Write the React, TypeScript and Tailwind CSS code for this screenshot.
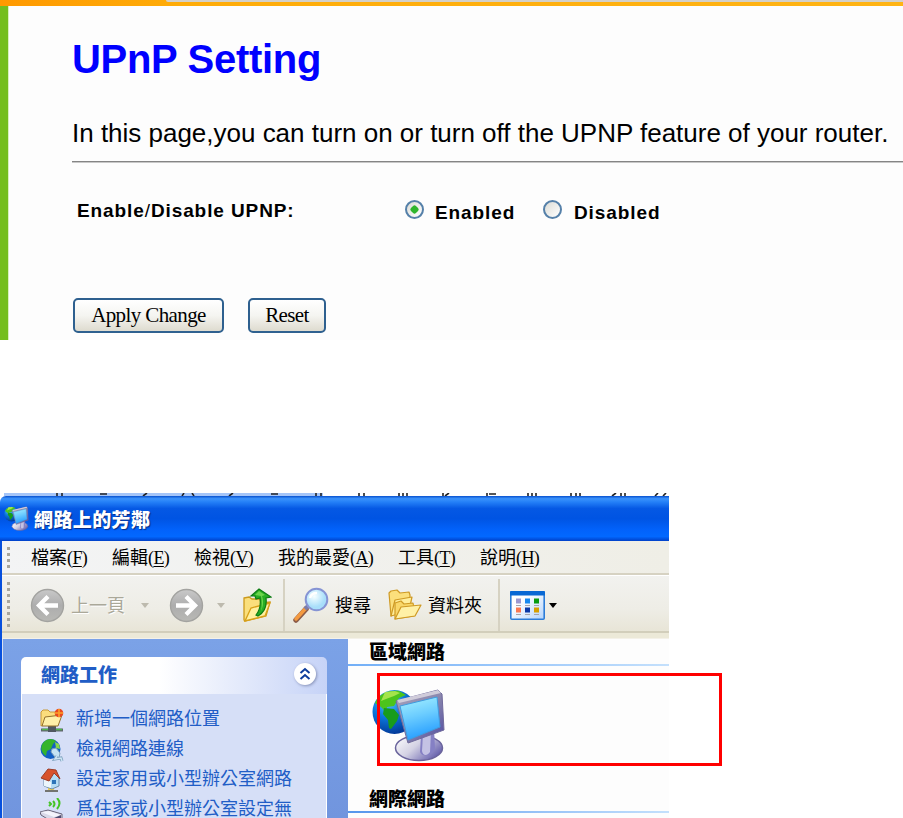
import type { ReactNode } from "react";

const cjk = "font-['Noto_Sans_CJK_TC',sans-serif]";

function GlobeMonitor({ size, className = "" }: { size: number; className?: string }) {
  return (
    <svg width={size} height={size} viewBox="0 0 74 74" className={className}>
      <defs>
        <radialGradient id="globe" cx="35%" cy="25%" r="75%">
          <stop offset="0" stopColor="#5cc8f8" />
          <stop offset=".5" stopColor="#0b78dc" />
          <stop offset="1" stopColor="#033c9c" />
        </radialGradient>
        <linearGradient id="screen" x1="0" y1="0" x2=".25" y2="1">
          <stop offset="0" stopColor="#a8f2ff" />
          <stop offset=".5" stopColor="#6ccdff" />
          <stop offset="1" stopColor="#2aa0ff" />
        </linearGradient>
        <linearGradient id="frame" x1="0" y1="0" x2="1" y2="1">
          <stop offset="0" stopColor="#a6a2bc" />
          <stop offset=".5" stopColor="#8c88ae" />
          <stop offset="1" stopColor="#4c48a0" />
        </linearGradient>
        <linearGradient id="base" x1="0" y1="0" x2="1" y2=".6">
          <stop offset="0" stopColor="#ffffff" />
          <stop offset=".5" stopColor="#d4d2e4" />
          <stop offset="1" stopColor="#6c66b0" />
        </linearGradient>
      </defs>
      <circle cx="22.500" cy="24" r="22" fill="url(#globe)" />
      <path d="M3 15C7 6 16 2 27 3l7 4-7 3-5 8-7 1-1 5-5-5z" fill="#4cc41c" />
      <path d="M13 4l10-1 5 2-6 3-8 3-5 2z" fill="#a4e44c" />
      <path d="M12 20l10 1 5 6-2 6-6 8-2-1-1-8-5-6z" fill="#189c1c" />
      <ellipse cx="47" cy="60" rx="23.500" ry="12.500" fill="url(#base)" stroke="#6a649c" strokeWidth="1.500" />
      <path d="M49 47l13-6 1 19c-1 8-13 10-15 4z" fill="#8580c4" />
      <path d="M51 46l8-3-1 21c-3 4-7 4-8-1z" fill="#c4c2e4" />
      <path d="M24 13L66 2l4 4 2 36-36 13z" fill="url(#frame)" stroke="#706a9c" strokeLinejoin="round" />
      <path d="M25 12L66 2l3 3-42 10z" fill="#d0ccda" />
      <path d="M28 18l37-9 3 30-32 13z" fill="url(#screen)" stroke="#3f9ce0" />
    </svg>
  );
}

function NavArrow({ forward = false }: { forward?: boolean }) {
  return (
    <svg width="35" height="35" viewBox="0 0 35 35">
      <defs>
        <linearGradient id="navGray" x1="0" y1="0" x2="0" y2="1">
          <stop offset="0" stopColor="#c9c9c9" />
          <stop offset=".5" stopColor="#adadad" />
          <stop offset="1" stopColor="#b9b9b5" />
        </linearGradient>
      </defs>
      <circle cx="17.500" cy="17.500" r="16" fill="url(#navGray)" stroke="#a3a3a0" strokeWidth="1.400" />
      <path
        d="M28 17.500H10M18 8.500l-9 9 9 9"
        transform={forward ? "rotate(180 17.500 17.500)" : undefined}
        fill="none"
        stroke="#fff"
        strokeWidth="4.300"
      />
    </svg>
  );
}

function FolderUpIcon() {
  return (
    <svg width="29" height="35" viewBox="0 0 29 35">
      <path d="M1 10l5-1 3 2h8l1 4 9-1-4 14-21 5-1-1z" fill="#fadf7c" stroke="#cc9a1c" strokeWidth="1.300" />
      <path d="M2 33L8 20l19-5-5 13z" fill="#fff0a0" stroke="#d8a018" strokeWidth="1.300" />
      <path d="M8 8L16 1l12 8-5 1c1 8-1 14-8 18l-2-1c4-5 5-10 4-17l-4 1-1-3z" fill="#27ae24" stroke="#0d7c14" strokeWidth="1.200" />
      <path d="M12 7l4-4 6 4-3 1c2 6 1 11-1 15 1-5 1-10 0-15z" fill="#6cd44c" />
    </svg>
  );
}

function SearchIcon() {
  return (
    <svg width="36" height="36" viewBox="0 0 36 36">
      <defs>
        <radialGradient id="lens" cx="40%" cy="35%">
          <stop offset="0" stopColor="#f8ffff" />
          <stop offset="1" stopColor="#a8defa" />
        </radialGradient>
      </defs>
      <path d="M3 33L13 22" stroke="#8c5c48" strokeWidth="5.500" strokeLinecap="round" />
      <path d="M3 32L13 21" stroke="#f49a40" strokeWidth="3.500" strokeLinecap="round" />
      <path d="M12 22l4-4" stroke="#7c7ca8" strokeWidth="4" />
      <circle cx="23.500" cy="12.500" r="10.800" fill="url(#lens)" stroke="#8694d4" strokeWidth="2" />
      <path d="M17 11c1-4 4-5 7-5" stroke="#fff" strokeWidth="2.500" fill="none" />
    </svg>
  );
}

function FoldersIcon() {
  return (
    <svg width="34" height="32" viewBox="0 0 34 32" stroke="#cf9a24" strokeWidth="1.200" strokeLinejoin="round">
      <path d="M1 4l2-2 6-1 3 3 9-1 1 3v12L3 27z" fill="#fbdf7c" />
      <path d="M3 27L7 11l17-3-3 14z" fill="#ffee9c" />
      <path d="M7 30V14l6-2 3 3 9-1 1 5v8z" fill="#f9d769" />
      <path d="M7 30l6-12 20-2-6 11z" fill="#fff1a6" />
    </svg>
  );
}

function ViewsIcon() {
  return (
    <svg width="35" height="29" viewBox="0 0 35 29">
      <defs>
        <linearGradient id="viewBg" x1="0" y1="0" x2="1" y2="1">
          <stop offset=".3" stopColor="#fff" />
          <stop offset="1" stopColor="#b4d4fc" />
        </linearGradient>
      </defs>
      <rect x=".8" y=".8" width="33.400" height="27.400" rx="1" fill="url(#viewBg)" stroke="#2c7cd8" strokeWidth="1.600" />
      <path d="M0 1Q0 0 1 0h33q1 0 1 1v3.500H0z" fill="#0868d4" />
      <path d="M6 7.500h5v5H6z" fill="#9c98d0" />
      <path d="M15 7.500h5v5h-5z" fill="#1688f0" />
      <path d="M24 7.500h5v5h-5z" fill="#089c10" />
      <path d="M6 16.500h5v5H6z" fill="#fc7850" />
      <path d="M15 16.500h5v5h-5z" fill="#0838a8" />
      <path d="M24 16.500h5v5h-5z" fill="#d8a000" />
      <path d="M6 14.500h5m4 0h5m4 0h5M6 23.500h5m4 0h5m4 0h5" stroke="#a4a4ac" />
    </svg>
  );
}

function NewPlaceIcon() {
  return (
    <svg width="24" height="25" viewBox="0 0 24 25">
      <path d="M1 22h22" stroke="#60646c" strokeWidth="3" />
      <path d="M2 21.500h6m8 0h6" stroke="#50b84c" strokeWidth="1.500" />
      <path d="M8 18h8v6H8z" fill="#505860" />
      <path d="M1 18V4l2-2h5l2 2h8l1 3v6z" fill="#fbdd7c" stroke="#c89838" />
      <path d="M2 18L5 9l17-2-4 11z" fill="#fff0a8" stroke="#94702c" />
      <circle cx="19" cy="5" r="4.300" fill="#e84820" />
      <path d="M19 1v8m-4-4h8" stroke="#fca028" strokeWidth="1.600" />
    </svg>
  );
}

function ConnectionsIcon() {
  return (
    <svg width="24" height="25" viewBox="0 0 24 25">
      <circle cx="10.500" cy="11" r="10" fill="#1260c4" />
      <path d="M3 5C7 0 12 0 16 3l-3 3-2 5-4 2-1 5C1 15 0 9 3 5z" fill="#34b42c" />
      <path d="M15 4l4 2 1 5-4-1z" fill="#88d848" />
      <path d="M12 11l4-1 4 5-1 5-4-1-4-5z" fill="#c4e4f4" stroke="#7ca0bc" />
      <path d="M17 18l-2 3 6-1 1 3" fill="none" stroke="#7ca0bc" strokeWidth="3" />
      <path d="M17 18l-2 3 6-1 1 3" fill="none" stroke="#cce4f4" strokeWidth="1.500" />
    </svg>
  );
}

function HomeIcon() {
  return (
    <svg width="24" height="25" viewBox="0 0 24 25">
      <path d="M5 23h13M11 18v5" stroke="#747470" strokeWidth="2" />
      <path d="M8 21h6" stroke="#f0cc50" strokeWidth="2" />
      <path d="M4 10v8l8 3 7-3v-9l-6-5z" fill="#b4dcf4" stroke="#6c8ca8" />
      <path d="M4 11v7l7 2v-6z" fill="#ecf6fc" />
      <path d="M1 10L8 1l8 1 4 9-6-6-5 8z" fill="#d8522c" stroke="#9c3c28" />
      <path d="M12 12h4v4h-4z" fill="#2c74b8" />
    </svg>
  );
}

function WirelessIcon() {
  return (
    <svg width="24" height="25" viewBox="0 0 24 25">
      <path d="M9 4l2 2-2 2M13 3q3 3 0 6M17 0q5 5 0 11" fill="none" stroke="#44c424" strokeWidth="2" />
      <path d="M0 14l8-2 14 4v6l-8 3-13-8z" fill="#d8d8e8" stroke="#686478" />
      <path d="M1 14l8-1 12 4-7 2z" fill="#f4f4fc" />
      <path d="M14 20l7-3v4l-7 3z" fill="#504c70" />
    </svg>
  );
}

function Caret({ className }: { className: string }) {
  return (
    <svg width="8" height="5" viewBox="0 0 8 5" className={className}>
      <path d="M0 0h8L4 5z" fill="currentColor" />
    </svg>
  );
}

function Grip({ className }: { className: string }) {
  return (
    <div
      className={`w-[4px] bg-[linear-gradient(#a7a69d_50%,transparent_50%)] bg-[length:3px_6px] bg-repeat-y ${className}`}
    />
  );
}

const menus = [
  { label: "檔案", key: "F", width: "w-[81px]" },
  { label: "編輯", key: "E", width: "w-[82px]" },
  { label: "檢視", key: "V", width: "w-[84px]" },
  { label: "我的最愛", key: "A", width: "w-[120px]" },
  { label: "工具", key: "T", width: "w-[82px]" },
  { label: "說明", key: "H", width: "w-[70px]" },
];

const tasks: { label: string; icon: ReactNode }[] = [
  { label: "新增一個網路位置", icon: <NewPlaceIcon /> },
  { label: "檢視網路連線", icon: <ConnectionsIcon /> },
  { label: "設定家用或小型辦公室網路", icon: <HomeIcon /> },
  { label: "爲住家或小型辦公室設定無", icon: <WirelessIcon /> },
];

function Radio({ checked = false }: { checked?: boolean }) {
  return (
    <span className="flex size-[19px] items-center justify-center rounded-full border-2 border-[#5580a9] bg-gradient-to-br from-[#dcdcd6] to-white">
      {checked && <span className="size-[7px] rotate-45 rounded-[2px] bg-[#2fb52c]" />}
    </span>
  );
}

function PushButton({ children, className }: { children: string; className: string }) {
  return (
    <button
      className={`h-[35px] rounded-[5px] border-2 border-[#2e608f] bg-gradient-to-b from-white via-[#f5f5f1] to-[#dedbcf] whitespace-nowrap ${className}`}
    >
      {children}
    </button>
  );
}

function RouterPage() {
  return (
    <section className="h-[340px] bg-[#fdfdfd] font-['Liberation_Sans',Arial,sans-serif] text-black">
      <div className="flex h-[6px] flex-col bg-gradient-to-r from-[#ff9900] via-[#ffac08] via-20% to-[#ffb414]">
        <div className="ml-[166px] h-[2px] rounded-bl-full bg-[#d4d0c8]" />
      </div>
      <div className="flex h-[334px]">
        <div className="w-[9px] shrink-0 border-r border-[#d8f0c0] bg-[#74be1e]" />
        <div className="min-w-0 flex-1 pl-[63px]">
          <h1 className="pt-[30px] text-[40px] leading-[46px] font-bold tracking-[-0.3px] whitespace-nowrap text-[#0000ff]">UPnP Setting</h1>
          <p className="mt-[36px] text-[26px] leading-[30px] tracking-[-0.01px] whitespace-nowrap">
            In this page,you can turn on or turn off the UPNP feature of your router.
          </p>
          <div className="mt-[13px] h-[2px] border-t border-[#858585] bg-[#c8c8c8]" />
          <div className="mt-[37px] flex h-[30px] pl-[5px] text-[19px] leading-[24px] font-bold tracking-[0.9px]">
            <span className="mt-[-1px] w-[328px]">
              Enable<span className="font-normal">/</span>Disable UPNP:
            </span>
            <Radio checked />
            <span className="mt-[1px] ml-[11px] w-[108px]">Enabled</span>
            <Radio />
            <span className="mt-[1px] ml-[12px]">Disabled</span>
          </div>
          <div className="mt-[68px] flex gap-[24px] pl-px font-['Liberation_Serif',serif] text-[21px] tracking-[-0.6px]">
            <PushButton className="w-[151px]">Apply Change</PushButton>
            <PushButton className="w-[78px]">Reset</PushButton>
          </div>
        </div>
      </div>
    </section>
  );
}

function TitleBar() {
  return (
    <div>
      <svg width="669" height="3" viewBox="0 0 669 3" className="block">
        <path d="M4 0h319v3H4z" fill="#a5c5f8" />
        <path
          d="M57 0v3m5-3v3M100 1h7M147 0l-4 3M184 0l-2 3m10-3l2 3M233 0l-4 3M271 1h7M316 0v3m5-3v3M359 0v3m5-3v3M399 0v3m4-3v3m4-3v3M443 0v3m6-3l-4 3M487 0v3m2-2h7M528 0v3m4-3v3m4-3v3M571 0v3m5-3v3m4-3v3M616 0l-4 3m9-3v3m4-3v3M658 0l-3 3m11-3l-3 3"
          stroke="#222"
          strokeWidth="1.600"
        />
      </svg>
      <div className="flex h-[45px] items-center rounded-tl-[6px] bg-[linear-gradient(#0750cf_0,#3b92fb_6%,#2581f8_13%,#0558e4_28%,#0054e3_50%,#0262fb_75%,#0268ff_90%,#0040c8_100%)] pl-[4px]">
        <GlobeMonitor size={25} />
        <span className={`ml-[5px] text-[19px] leading-[24px] font-black tracking-[0.4px] text-white [text-shadow:1px_1px_1px_#0a2b80] ${cjk}`}>網路上的芳鄰</span>
      </div>
    </div>
  );
}

function MenuBar() {
  return (
    <div className={`flex h-[34px] border-b-2 border-[#d6d2c2] bg-gradient-to-r from-[#f3f4f5] to-[#efeee6] text-[18px] leading-[31px] text-black ${cjk}`}>
      <Grip className="mt-[6px] mr-[20px] ml-[5px] h-[22px]" />
      {menus.map((m) => (
        <span key={m.key} className={`whitespace-nowrap ${m.width}`}>
          {m.label}
          <span className="font-['Liberation_Serif',serif] tracking-[-0.6px]">
            (<span className="underline underline-offset-2">{m.key}</span>)
          </span>
        </span>
      ))}
    </div>
  );
}

function Toolbar() {
  return (
    <div className={`flex h-[58px] items-center border-t border-b-2 border-t-white border-b-[#d2cebb] bg-[linear-gradient(#f2f2ef,#eeede6_60%,#e8e5d7)] pt-[3px] text-[18px] text-black ${cjk}`}>
      <Grip className="ml-[5px] h-[46px]" />
      <div className="ml-[19px]"><NavArrow /></div>
      <span className="mb-[2px] ml-[6px] w-[70px] text-[#aaa899] [text-shadow:1px_1px_#fff]">上一頁</span>
      <Caret className="text-[#bdbaae]" />
      <div className="ml-[20px]"><NavArrow forward /></div>
      <Caret className="ml-[13px] text-[#bdbaae]" />
      <div className="ml-[18px]"><FolderUpIcon /></div>
      <div className="ml-[11px] h-[52px] w-[2px] self-end bg-[#d6d2c2]" />
      <div className="ml-[8px]"><SearchIcon /></div>
      <span className="mb-[2px] ml-[6px] w-[53px]">搜尋</span>
      <FoldersIcon />
      <span className="mb-[2px] ml-[6px] w-[70px]">資料夾</span>
      <div className="h-[52px] w-[2px] self-end bg-[#d6d2c2]" />
      <div className="ml-[10px]"><ViewsIcon /></div>
      <Caret className="ml-[4px] text-black" />
    </div>
  );
}

function Sidebar() {
  return (
    <aside className={`w-[345px] bg-gradient-to-b from-[#7ba2e7] to-[#7195de] pt-[18px] pl-[18px] ${cjk}`}>
      <div className="w-[306px] text-[#215dc6]">
        <div className="flex h-[37px] items-center justify-between rounded-t-[5px] bg-[linear-gradient(90deg,#fff_45%,#c6d3f7)] pr-[11px] pl-[20px]">
          <span className="mb-[2px] text-[19px] font-black">網路工作</span>
          <span className="mb-[3px] flex size-[22px] items-center justify-center rounded-full bg-white shadow-[1px_1px_3px_#8792b8]">
            <svg width="12" height="14" viewBox="0 0 12 14">
              <path d="M1.500 6L6 2l4.500 4M1.500 12L6 8l4.500 4" fill="none" stroke="#0c3c9c" strokeWidth="2" />
            </svg>
          </span>
        </div>
        <div className="h-[124px] border-x border-white bg-[#d6dff7] pt-[12px] pl-[18px]">
          {tasks.map((t) => (
            <div key={t.label} className="flex h-[30px] items-start text-[18px] leading-[22px] whitespace-nowrap">
              <span className="h-[20px] w-[36px] pt-[2px]">{t.icon}</span>
              <span className="h-[22px]">{t.label}</span>
            </div>
          ))}
        </div>
      </div>
    </aside>
  );
}

function NetworkPane() {
  return (
    <main className={`relative w-[321px] bg-[#fdfdfd] text-[19px] font-black text-black ${cjk}`}>
      <h2 className="h-[25px] pl-[21px] leading-[23px]">區域網路</h2>
      <div className="h-[2px] bg-gradient-to-r from-[#72aff7] to-[#c4e0fc]" />
      <GlobeMonitor size={74} className="mt-[22px] ml-[24px]" />
      <h2 className="mt-[24px] h-[25px] pl-[21px] leading-[23px]">網際網路</h2>
      <div className="h-[2px] bg-gradient-to-r from-[#5696ec] to-[#c4e0fc]" />
      <div className="absolute top-[34px] left-[29px] h-[93px] w-[345px] border-[3px] border-[#ff0000]" />
    </main>
  );
}

export default function App() {
  return (
    <div className="h-[818px] w-[903px] overflow-hidden bg-white">
      <RouterPage />
      <div className="mt-[153px] w-[669px]">
        <TitleBar />
        <div className="border-l-2 border-[#0750dd]">
          <MenuBar />
          <Toolbar />
          <div className="h-[6px] border-b border-[#f4f1e8] bg-[#ece9d8]" />
          <div className="flex h-[179px] border-l border-[#d8e0f0]">
            <Sidebar />
            <NetworkPane />
          </div>
        </div>
      </div>
    </div>
  );
}
